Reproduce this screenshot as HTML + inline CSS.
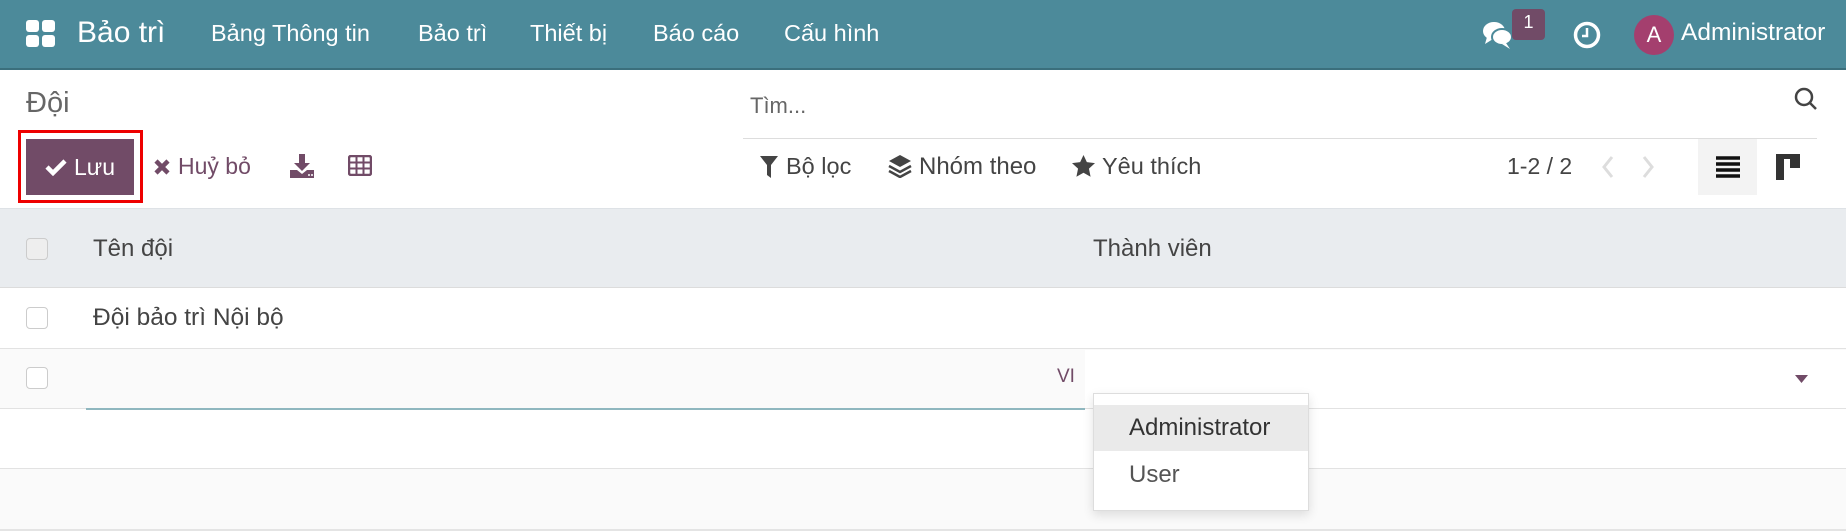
<!DOCTYPE html>
<html><head><meta charset="utf-8"><style>
*{box-sizing:border-box;margin:0;padding:0}
body{width:1846px;height:532px;overflow:hidden;background:#fff;font-family:"Liberation Sans",sans-serif;position:relative;color:#333}
.a{position:absolute;white-space:nowrap}
.nav{position:absolute;left:0;top:0;width:1846px;height:70px;background:#4c8a9a;border-bottom:2px solid #3b6f7c}
.nv{color:#fff;font-size:23.5px;top:20px}
.t{font-size:23px;color:#444}
.row{position:absolute;left:0;width:1846px;border-bottom:1px solid #e2e2e2}
.cb{position:absolute;left:26px;width:22px;height:22px;border:1px solid #ccc;border-radius:4px;background:#fff}
</style></head><body>
<div class="nav"></div>
<svg class="a" style="left:26px;top:20px" width="29" height="27" viewBox="0 0 29 27"><rect x="0" y="0" width="13" height="12" rx="3" fill="#fff"/><rect x="16" y="0" width="13" height="12" rx="3" fill="#fff"/><rect x="0" y="15" width="13" height="12" rx="3" fill="#fff"/><rect x="16" y="15" width="13" height="12" rx="3" fill="#fff"/></svg>
<div class="a nv" style="left:77px;top:16px;font-size:30px">Bảo trì</div>
<div class="a nv" style="left:211px">Bảng Thông tin</div>
<div class="a nv" style="left:418px">Bảo trì</div>
<div class="a nv" style="left:530px">Thiết bị</div>
<div class="a nv" style="left:653px">Báo cáo</div>
<div class="a nv" style="left:784px">Cấu hình</div>
<svg class="a" style="left:1482px;top:21px" width="34" height="28" viewBox="0 0 34 28"><ellipse cx="12" cy="10" rx="11" ry="9" fill="#fff"/><path d="M5 16 L3 23 L11 18Z" fill="#fff"/><ellipse cx="20" cy="16" rx="10" ry="8" fill="#fff" stroke="#4c8a9a" stroke-width="2"/><path d="M24 22 L28 28 L20 23Z" fill="#fff"/></svg>
<div class="a" style="left:1512px;top:9px;width:33px;height:31px;background:#714b67;border-radius:4px;color:#fff;font-size:18px;text-align:center;line-height:26px">1</div>
<svg class="a" style="left:1573px;top:21px" width="28" height="28" viewBox="0 0 28 28"><circle cx="14" cy="14" r="11.5" fill="none" stroke="#fff" stroke-width="3.5"/><path d="M14 7v8h-5" fill="none" stroke="#fff" stroke-width="2.5"/></svg>
<div class="a" style="left:1634px;top:15px;width:40px;height:40px;border-radius:50%;background:#a43f6e;color:#fff;font-size:22px;text-align:center;line-height:40px">A</div>
<div class="a nv" style="left:1681px;font-size:24.5px;top:19px">Administrator</div>

<div class="a" style="left:26px;top:87px;font-size:29px;color:#666">Đội</div>
<div class="a" style="left:750px;top:93px;font-size:22px;color:#666">Tìm...</div>
<svg class="a" style="left:1794px;top:87px" width="24" height="24" viewBox="0 0 24 24"><circle cx="10" cy="10" r="8" fill="none" stroke="#444" stroke-width="2.5"/><path d="M16 16l6 6" stroke="#444" stroke-width="2.5"/></svg>
<div class="a" style="left:743px;top:138px;width:1074px;height:1px;background:#ddd"></div>

<div class="a" style="left:18px;top:130px;width:125px;height:73px;border:3px solid #e00"></div>
<div class="a" style="left:26px;top:139px;width:108px;height:56px;background:#714b67;color:#fff;font-size:23px;line-height:56px"><svg style="position:absolute;left:19px;top:19px" width="22" height="18" viewBox="0 0 22 18"><path d="M2 9l6 6L20 3" fill="none" stroke="#fff" stroke-width="4.5"/></svg><span style="position:absolute;left:48px">Lưu</span></div>
<svg class="a" style="left:153px;top:158px" width="18" height="18" viewBox="0 0 18 18"><path d="M3 3l12 12M15 3L3 15" stroke="#714b67" stroke-width="4.5"/></svg>
<div class="a" style="left:178px;top:153px;font-size:23px;color:#714b67">Huỷ bỏ</div>
<svg class="a" style="left:290px;top:154px" width="24" height="24" viewBox="0 0 24 24"><path d="M9 0h6v9h5l-8 8-8-8h5z" fill="#714b67"/><path d="M0 16h7l5 4 5-4h7v8H0z" fill="#714b67"/><circle cx="19" cy="21" r="1" fill="#fff"/><circle cx="22" cy="21" r="1" fill="#fff"/></svg>
<svg class="a" style="left:348px;top:155px" width="24" height="21" viewBox="0 0 24 21"><rect x="1" y="1" width="22" height="19" rx="2" fill="none" stroke="#714b67" stroke-width="2.5"/><path d="M1 7.5h22M1 13.5h22M8.5 1v19M15.5 1v19" stroke="#714b67" stroke-width="2"/></svg>

<svg class="a" style="left:760px;top:156px" width="18" height="22" viewBox="0 0 18 22"><path d="M0 0h18L11 9v13L7 19V9z" fill="#444"/></svg>
<div class="a t" style="left:786px;top:153px;font-size:23.5px">Bộ lọc</div>
<svg class="a" style="left:888px;top:154px" width="24" height="24" viewBox="0 0 24 24"><path d="M12 1L23 7 12 13 1 7z" fill="#444"/><path d="M1 12l11 6 11-6M1 17l11 6 11-6" fill="none" stroke="#444" stroke-width="2.5"/></svg>
<div class="a t" style="left:919px;top:153px;font-size:24px">Nhóm theo</div>
<svg class="a" style="left:1072px;top:155px" width="23" height="22" viewBox="0 0 24 23"><path d="M12 0l3.5 7.5 8.5 1-6.3 5.7 1.7 8.5L12 18.5 4.6 22.7 6.3 14.2 0 8.5l8.5-1z" fill="#444"/></svg>
<div class="a t" style="left:1102px;top:153px;font-size:23.5px">Yêu thích</div>
<div class="a t" style="left:1507px;top:153px">1-2 / 2</div>
<svg class="a" style="left:1600px;top:155px" width="60" height="24" viewBox="0 0 60 24"><path d="M12 2L4 12l8 10M44 2l8 10-8 10" fill="none" stroke="#ddd" stroke-width="3"/></svg>
<div class="a" style="left:1698px;top:139px;width:59px;height:56px;background:#f3f3f3"></div>
<svg class="a" style="left:1716px;top:156px" width="24" height="22" viewBox="0 0 24 22"><path d="M0 2h24M0 8h24M0 14h24M0 20h24" stroke="#111" stroke-width="3.5"/></svg>
<svg class="a" style="left:1776px;top:154px" width="24" height="26" viewBox="0 0 24 26"><rect x="0" y="0" width="24" height="5" fill="#333"/><rect x="0" y="0" width="8" height="26" fill="#333"/><rect x="14" y="0" width="10" height="14" fill="#333"/></svg>

<div class="row" style="top:208px;height:80px;background:#e9ecef;border-top:1px solid #dee2e6;border-bottom:1px solid #dcdcdc"></div>
<div class="cb" style="top:238px;background:#eee"></div>
<div class="a t" style="left:93px;top:235px;font-size:24px">Tên đội</div>
<div class="a t" style="left:1093px;top:235px;font-size:24px">Thành viên</div>

<div class="row" style="top:288px;height:61px"></div>
<div class="cb" style="top:307px"></div>
<div class="a t" style="left:93px;top:304px;font-size:24.5px">Đội bảo trì Nội bộ</div>

<div class="row" style="top:349px;height:60px;background:#fafafa"></div>
<div class="a" style="left:1085px;top:350px;width:761px;height:58px;background:#fff"></div>
<div class="cb" style="top:367px"></div>
<div class="a" style="left:1057px;top:366px;font-size:19px;color:#714b67">VI</div>
<div class="a" style="left:86px;top:408px;width:999px;height:2px;background:#8fb7bf"></div>
<svg class="a" style="left:1795px;top:375px" width="13" height="9" viewBox="0 0 13 9"><path d="M0 0h13L6.5 8z" fill="#714b67"/></svg>

<div class="row" style="top:409px;height:60px"></div>
<div class="row" style="top:469px;height:62px;background:#fafafa;border-bottom:2px solid #e4e4e4"></div>

<div class="a" style="left:1093px;top:393px;width:216px;height:118px;background:#fff;border:1px solid #ddd;box-shadow:0 4px 10px rgba(0,0,0,.12)"></div>
<div class="a" style="left:1094px;top:405px;width:214px;height:46px;background:#eaeaea"></div>
<div class="a" style="left:1129px;top:414px;font-size:24px;color:#333">Administrator</div>
<div class="a" style="left:1129px;top:461px;font-size:24px;color:#555">User</div>
</body></html>
